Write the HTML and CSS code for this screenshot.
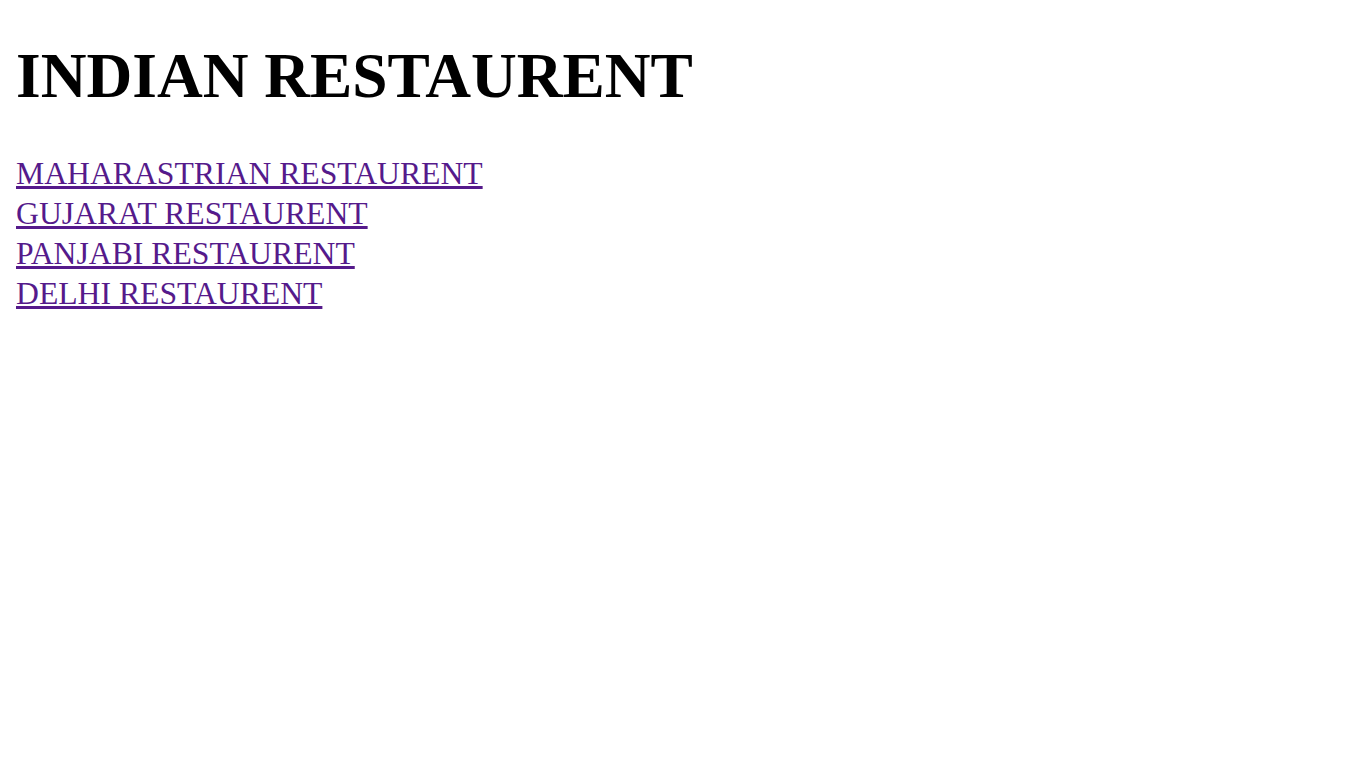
FILE: index.html
```html
<!DOCTYPE html>
<html>
<head>
<meta charset="utf-8">
<link rel="stylesheet" href="styles.css">
</head>
<body>
<h1 class="title">INDIAN RESTAURENT</h1>
<nav class="links">
<a class="link" href="#">MAHARASTRIAN RESTAURENT</a>
<a class="link" href="#">GUJARAT RESTAURENT</a>
<a class="link" href="#">PANJABI RESTAURENT</a>
<a class="link" href="#">DELHI RESTAURENT</a>
</nav>
</body>
</html>
```
FILE: styles.css
```css
body {
  margin: 0;
  padding: 0 16px;
  font-family: "Liberation Serif", "Times New Roman", serif;
  background: #fff;
}
.title {
  font-size: 63.4px;
  font-weight: bold;
  margin: 40px 0 0 0;
  line-height: 72px;
  color: #000;
}
.links {
  display: flex;
  flex-direction: column;
  align-items: flex-start;
  margin-top: 42px;
}
.link {
  font-size: 31.7px;
  line-height: 40px;
  color: #551a8b;
  text-decoration: underline;
}
```
